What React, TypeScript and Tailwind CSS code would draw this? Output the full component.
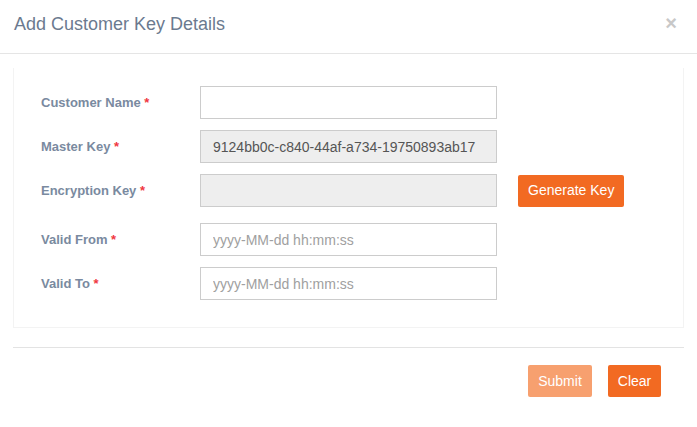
import React from "react";

const Label = ({ children }: { children: React.ReactNode }) => (
  <div className="w-[186px] pl-[27px] text-[13px] font-bold text-[#7a8aa0]">
    {children} <span className="text-[#f0383f]">*</span>
  </div>
);

export default function App() {
  const inputCls =
    "w-[297px] h-[33px] border border-[#cccccc] px-[12px] text-[14px] text-[#555555] outline-none placeholder:text-[#a0a0a0]";
  return (
    <div
      className="w-[697px] h-[427px] bg-white relative"
      style={{ fontFamily: '"Liberation Sans", Arial, sans-serif' }}
    >
      <div className="h-[54px] border-b border-[#e5e5e5] flex items-center justify-between pl-[14px] pr-[20px]">
        <div className="text-[18px] text-[#6b7a8f] mt-[-4px]">Add Customer Key Details</div>
        <div className="text-[20px] text-[#c8c8c8] font-bold leading-none mt-[-8px]">×</div>
      </div>
      <div className="mx-[13px] mt-[14px] h-[260px] border-l border-r border-b border-l-[#f3f3f3] border-r-[#f3f3f3] border-b-[#f3f3f3] pt-[18px] flex flex-col">
        <div className="flex items-center">
          <Label>Customer Name</Label>
          <input className={inputCls + " bg-white"} />
        </div>
        <div className="flex items-center mt-[11px]">
          <Label>Master Key</Label>
          <input
            className={inputCls + " bg-[#eeeeee]"}
            readOnly
            value="9124bb0c-c840-44af-a734-19750893ab17"
          />
        </div>
        <div className="flex items-center mt-[11px]">
          <Label>Encryption Key</Label>
          <input className={inputCls + " bg-[#eeeeee]"} readOnly />
          <button className="ml-[21px] h-[32px] px-[10px] rounded-[2px] bg-[#f26a22] text-white text-[14px]">
            Generate Key
          </button>
        </div>
        <div className="flex items-center mt-[16px]">
          <Label>Valid From</Label>
          <input className={inputCls + " bg-white"} placeholder="yyyy-MM-dd hh:mm:ss" />
        </div>
        <div className="flex items-center mt-[11px]">
          <Label>Valid To</Label>
          <input className={inputCls + " bg-white"} placeholder="yyyy-MM-dd hh:mm:ss" />
        </div>
      </div>
      <div className="mx-[13px] mt-[19px] border-t border-[#e3e3e3] pt-[17px] flex justify-end pr-[23px] gap-[16px]">
        <button className="w-[64px] h-[32px] rounded-[2px] bg-[#f7a06f] text-white text-[14px]">
          Submit
        </button>
        <button className="w-[53px] h-[32px] rounded-[2px] bg-[#f26a22] text-white text-[14px]">
          Clear
        </button>
      </div>
    </div>
  );
}
